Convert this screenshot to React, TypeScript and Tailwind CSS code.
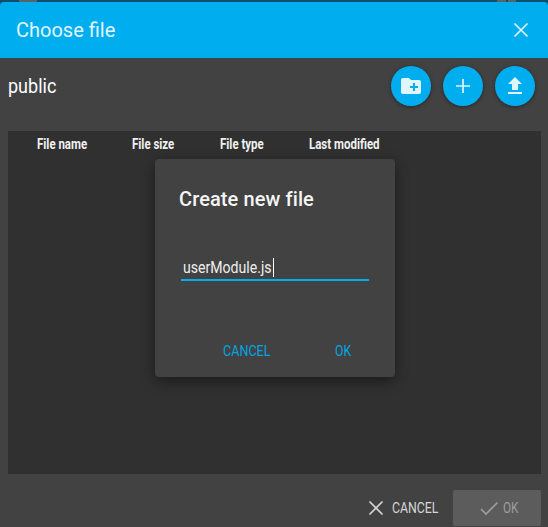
import React from "react";

const columns = [
  { label: "File name", width: "w-[95px]" },
  { label: "File size", width: "w-[88px]" },
  { label: "File type", width: "w-[89px]" },
  { label: "Last modified", width: "w-[90px]" },
];

function CloseIcon() {
  return (
    <svg width="24" height="24" viewBox="0 0 24 24" fill="none" stroke="currentColor" strokeWidth="1.7">
      <path d="M5.5 5.5l13 13M18.5 5.5l-13 13" />
    </svg>
  );
}

function RoundButton({ children }: { children: React.ReactNode }) {
  return (
    <button className="flex h-10 w-10 items-center justify-center rounded-full bg-[#00aeef] text-[#e1f5fe] shadow-[0_1px_4px_rgba(0,0,0,0.4)]">
      {children}
    </button>
  );
}

export default function App() {
  return (
    <div className="relative flex h-[527px] w-[548px] flex-col overflow-hidden bg-[#0b4f6c] font-['Roboto',sans-serif]">
      <div className="flex h-[2px] shrink-0">
        <div className="ml-[19px] w-[18px] bg-[#5a6468]" />
        <div className="ml-[460px] w-[9px] bg-[#5a6468]" />
        <div className="ml-[2px] w-[8px] bg-[#5a6468]" />
      </div>
      <div className="flex h-[56px] shrink-0 items-center justify-between rounded-t-[4px] bg-[#00aeef] pl-4 pr-[15px]">
        <span className="text-[20px] text-[#e1f5fe]">Choose file</span>
        <span className="text-[#e1f5fe]">
          <CloseIcon />
        </span>
      </div>

      <div className="flex flex-1 flex-col bg-[#424242]">
        <div className="flex h-[73px] shrink-0 items-start justify-between pl-2 pr-[13px] pt-2">
          <span className="mt-[8px] origin-left scale-x-90 text-[20px] leading-[24px] text-white">public</span>
          <div className="flex gap-3">
            <RoundButton>
              <svg width="24" height="24" viewBox="0 0 24 24" fill="currentColor">
                <path d="M20 6h-8l-2-2H4c-1.11 0-1.99.89-1.99 2L2 18c0 1.11.89 2 2 2h16c1.11 0 2-.89 2-2V8c0-1.11-.89-2-2-2zm-1 8h-3v3h-2v-3h-3v-2h3V9h2v3h3v2z" />
              </svg>
            </RoundButton>
            <RoundButton>
              <svg width="24" height="24" viewBox="0 0 24 24" fill="none" stroke="currentColor" strokeWidth="1.7">
                <path d="M12 5v14M5 12h14" />
              </svg>
            </RoundButton>
            <RoundButton>
              <svg width="24" height="24" viewBox="0 0 24 24" fill="currentColor">
                <path d="M9 16h6v-6h4l-7-7-7 7h4zm-4 2h14v2H5z" />
              </svg>
            </RoundButton>
          </div>
        </div>

        <div className="mx-2 h-[343px] w-[533px] shrink-0 bg-[#303030]">
          <div className="flex pl-[29px] pt-[6px]">
            {columns.map((c) => (
              <div key={c.label} className={c.width}>
                <span className="block origin-left scale-x-[0.82] whitespace-nowrap text-[14px] font-bold leading-[15px] text-[#f0f0f0]">
                  {c.label}
                </span>
              </div>
            ))}
          </div>
        </div>

        <div className="flex flex-1 items-center justify-end pb-[1px] pr-[7px] pt-[16px]">
          <button className="mr-[15px] flex items-center text-[14px] text-[#d6d6d6]">
            <CloseIcon />
            <span className="ml-[4px] block w-[46px] origin-left scale-x-[0.88] whitespace-nowrap text-left">CANCEL</span>
          </button>
          <button className="flex h-[36px] w-[88px] items-center rounded-[2px] bg-[#5c5c5c] pl-[24px] text-[14px] text-[#9e9e9e]">
            <svg width="24" height="24" viewBox="0 0 24 24" fill="none" stroke="currentColor" strokeWidth="1.7">
              <path d="M4 13l5 5L20.5 6.5" />
            </svg>
            <span className="ml-[2px] block w-[16px] origin-left scale-x-[0.84] whitespace-nowrap text-left">OK</span>
          </button>
        </div>
      </div>

      <div className="absolute left-[155px] top-[159px] flex h-[218px] w-[240px] flex-col rounded-[4px] bg-[#424242] shadow-[0_4px_14px_rgba(0,0,0,0.45)]">
        <h2 className="ml-6 mt-[28px] text-[20px] font-medium leading-[24px] tracking-[0.1px] text-[#f5f5f5]">Create new file</h2>
        <div className="mx-[26px] mt-[42px] flex h-[28px] items-center border-b-2 border-[#00aeef] pl-[2px] pt-[3px]">
          <span className="block w-[89px] origin-left scale-x-[0.88] whitespace-nowrap text-[16px] text-[#eeeeee]">userModule.js</span>
          <span className="ml-px h-[19px] w-px bg-white" />
        </div>
        <div className="mt-auto flex pb-[15px] pl-[68px] text-[14px] text-[#00a5e5]">
          <span className="block w-[47px] origin-left scale-x-90 whitespace-nowrap">CANCEL</span>
          <span className="ml-[65px] block w-[16px] origin-left scale-x-[0.88] whitespace-nowrap">OK</span>
        </div>
      </div>
    </div>
  );
}
